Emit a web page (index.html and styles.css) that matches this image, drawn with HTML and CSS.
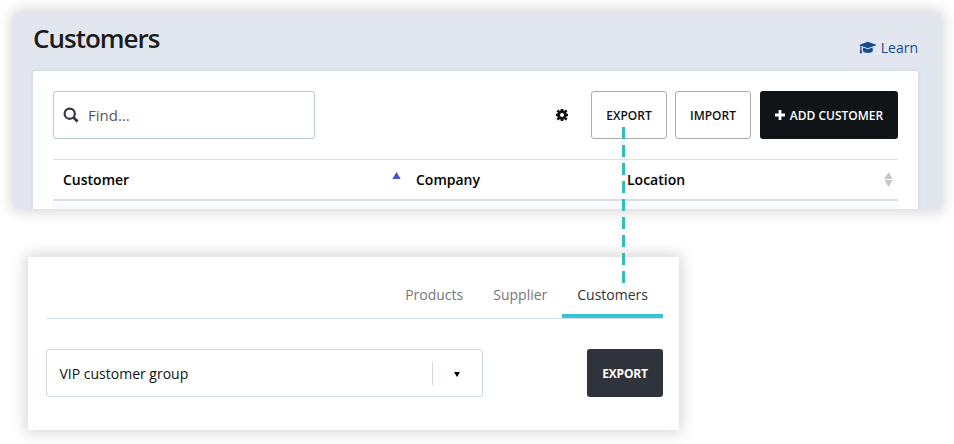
FILE: index.html
```html
<!DOCTYPE html>
<html lang="en">
<head>
<meta charset="utf-8">
<title>Customers</title>
<link rel="stylesheet" href="styles.css">
</head>
<body>
<section class="page">
  <header class="page-head">
    <h1>Customers</h1>
    <a class="learn"><svg width="18" height="14" viewBox="0 0 18 14"><path fill="currentColor" d="M8.800.8 17.800 4 8.800 7.200 0 4zM4.100 6.500 8.800 8.200l4.800-1.700.3 3.800q-1.500 1.800-5 1.800t-5.100-1.800zM1.300 4.500h1.200V8L3.100 12.200H.8L1.300 8z"/></svg><span>Learn</span></a>
  </header>
  <div class="card">
    <div class="toolbar">
      <div class="search"><svg width="16" height="16" viewBox="0 0 16 16"><circle cx="6.700" cy="6.700" r="5.100" fill="none" stroke="currentColor" stroke-width="2.200"/><path d="m10.300 10.300 4.300 4.300" fill="none" stroke="currentColor" stroke-width="2.800"/></svg><span>Find...</span></div>
      <svg class="gear" width="12" height="12" viewBox="0 0 12 12"><g fill="none" stroke="currentColor"><circle cx="6" cy="6" r="3.400" stroke-width="2.800"/><path stroke-width="2.600" d="M6 0v2.500M6 9.500V12M0 6h2.500M9.500 6H12M1.400 1.400l2.200 2.200M8.400 8.400l2.200 2.200M10.600 1.400l-2.200 2.200M3.600 8.400l-2.200 2.200"/></g></svg>
      <button class="btn">EXPORT</button>
      <button class="btn">IMPORT</button>
      <button class="btn add"><svg width="10" height="10" viewBox="0 0 10 10"><path fill="currentColor" d="M3.600 0h2.800v3.600H10v2.800H6.400V10H3.600V6.400H0V3.600h3.600z"/></svg><span>ADD CUSTOMER</span></button>
    </div>
    <div class="thead">
      <div class="th"><span>Customer</span><svg width="9" height="7" viewBox="0 0 9 7"><path fill="#5350cb" d="M4.500 0 8.700 7H.3z"/></svg></div>
      <div class="th"><span>Company</span></div>
      <div class="th"><span>Location</span><svg width="9" height="15" viewBox="0 0 9 15"><path fill="#c6c6c6" d="M4.500 0 8.700 7H.3zM.3 8h8.400L4.500 15z"/></svg></div>
    </div>
    <div class="row"></div>
  </div>
</section>
<section class="panel">
  <nav class="tabs"><a>Products</a><a>Supplier</a><a class="active">Customers</a></nav>
  <div class="form">
    <div class="select"><span>VIP customer group</span><i class="arrow"><svg width="6" height="5" viewBox="0 0 6 5"><path d="M0 0h6L3 5z"/></svg></i></div>
    <button class="btn dark">EXPORT</button>
  </div>
</section>
<svg class="connector" width="3" height="156" viewBox="0 0 3 156"><path d="M1.500 0v156" stroke="#31bdb9" stroke-width="3" stroke-dasharray="12 6"/></svg>
</body>
</html>
```
FILE: styles.css
```css
* { box-sizing: border-box; }
body {
  margin: 0;
  padding: 13px 13px 0 14px;
  height: 444px;
  overflow: hidden;
  background: #fff;
  font-family: "Open Sans", sans-serif;
  font-size: 14px;
  color: #111;
}
svg { display: block; flex: none; }
.page {
  height: 196px;
  padding: 0 23px 0 19px;
  background: #e2e7ef;
  box-shadow: 0 0 14px 2px rgba(0, 0, 0, .18);
  overflow: hidden;
}
.page-head {
  display: flex;
  justify-content: space-between;
  height: 58px;
}
h1 {
  margin: 7px 0 0;
  font-size: 26px;
  line-height: 36px;
  font-weight: 600;
  letter-spacing: -1px;
  color: #1b1b1d;
}
.learn {
  display: flex;
  gap: 4px;
  margin-top: 25px;
  line-height: 20px;
  color: #174b91;
}
.learn svg { margin-top: 3px; }
.card {
  height: 150px;
  padding: 20px 20px 0;
  background: #fff;
  border-radius: 3px;
  box-shadow: 0 0 4px rgba(60, 80, 110, .14);
}
.toolbar { display: flex; align-items: center; height: 48px; }
.search {
  display: flex;
  align-items: center;
  gap: 9px;
  width: 262px;
  height: 48px;
  padding-left: 9px;
  border: 1px solid #b4c9c9;
  border-radius: 3px;
  color: #33363e;
}
.search span { color: #555a62; font-size: 15px; }
.gear { margin-left: auto; margin-right: 23px; }
.btn {
  display: flex;
  align-items: center;
  justify-content: center;
  width: 76px;
  height: 48px;
  margin: 0 8px 0 0;
  padding: 0;
  background: #fff;
  border: 1px solid #aaacad;
  border-radius: 3px;
  font: 600 12px "Open Sans", sans-serif;
  color: #111;
}
.btn.add {
  width: 138px;
  margin: 0 0 0 1px;
  gap: 5px;
  background: #101417;
  border: 0;
  color: #fff;
}
.btn.dark {
  margin: 0;
  background: #2f333c;
  border: 0;
  font-weight: 700;
  letter-spacing: -.2px;
  color: #fff;
}
.thead {
  display: grid;
  grid-template-columns: 353px 211px 1fr;
  height: 42px;
  margin-top: 20px;
  border-top: 1px solid #dfe1e3;
  border-bottom: 2px solid #d8e0e7;
}
.th {
  display: flex;
  justify-content: space-between;
  padding: 0 5px 0 10px;
  font-weight: 600;
  line-height: 40px;
  color: #000;
}
.th svg { margin-top: 12px; }
.row { height: 20px; background: #f8fafd; }
.panel {
  width: 651px;
  height: 173px;
  margin: 48px 0 0 14px;
  padding: 20px 16px 0 18px;
  background: #fff;
  box-shadow: 0 0 14px 2px rgba(0, 0, 0, .18);
}
.tabs {
  display: flex;
  justify-content: flex-end;
  height: 42px;
  border-bottom: 1px solid #d8e0e7;
}
.tabs a { height: 41px; padding: 0 15px; line-height: 36px; color: #777; }
.tabs .active { border-bottom: 4px solid #36c3d3; color: #333; }
.form { display: flex; justify-content: space-between; margin-top: 30px; }
.select {
  display: flex;
  align-items: center;
  justify-content: space-between;
  width: 437px;
  height: 48px;
  padding-left: 12.5px;
  border: 1px solid #cbdcda;
  border-radius: 3px;
}
.arrow {
  display: flex;
  align-items: center;
  width: 50px;
  height: 23px;
  padding: 3px 0 0 21px;
  border-left: 1px solid #cbdcda;
}
.connector { position: absolute; left: 622px; top: 127px; }
```
